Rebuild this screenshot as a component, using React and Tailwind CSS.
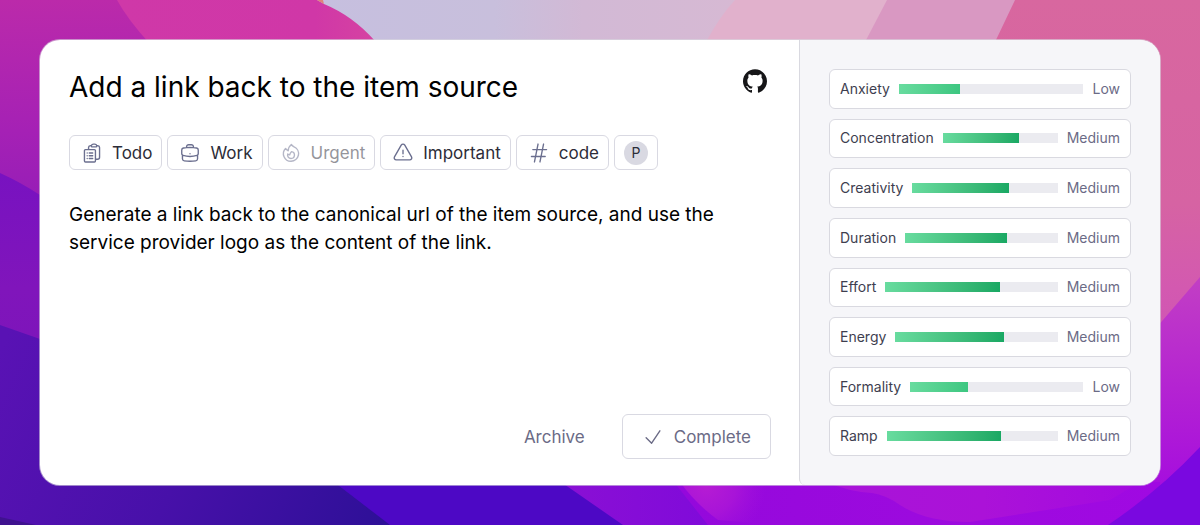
import React from 'react';
import {
  HiOutlineBriefcase,
  HiOutlineCheck,
  HiOutlineClipboardDocumentList,
  HiOutlineExclamationTriangle,
  HiOutlineFire,
  HiOutlineHashtag,
} from 'react-icons/hi2';
import { SiGithub } from 'react-icons/si';

const tags = [
  { label: 'Todo', icon: HiOutlineClipboardDocumentList },
  { label: 'Work', icon: HiOutlineBriefcase },
  { label: 'Urgent', icon: HiOutlineFire, muted: true },
  { label: 'Important', icon: HiOutlineExclamationTriangle },
  { label: 'code', icon: HiOutlineHashtag },
];

const attributes = [
  { name: 'Anxiety', level: 1 },
  { name: 'Concentration', level: 2 },
  { name: 'Creativity', level: 2 },
  { name: 'Duration', level: 2 },
  { name: 'Effort', level: 2 },
  { name: 'Energy', level: 2 },
  { name: 'Formality', level: 1 },
  { name: 'Ramp', level: 2 },
];

const levels = ['None', 'Low', 'Medium', 'High'];

function Wallpaper() {
  return (
    <svg
      className="absolute inset-0 -z-10 h-full w-full"
      viewBox="0 0 1200 525"
      preserveAspectRatio="none"
      aria-hidden="true"
    >
      <defs>
        <linearGradient id="left" x1="0" y1="0" x2="0" y2="1">
          <stop offset="0" stopColor="#bb2aaa" />
          <stop offset="0.5" stopColor="#a521b5" />
          <stop offset="1" stopColor="#8a1bb8" />
        </linearGradient>
        <linearGradient id="leftMid" x1="0" y1="0" x2="0" y2="1">
          <stop offset="0" stopColor="#7812c0" />
          <stop offset="0.4" stopColor="#8015bb" />
          <stop offset="1" stopColor="#7814b8" />
        </linearGradient>
        <linearGradient id="bottom" gradientUnits="userSpaceOnUse" x1="0" y1="350" x2="390" y2="525">
          <stop offset="0" stopColor="#5912b4" />
          <stop offset="0.5" stopColor="#4710a9" />
          <stop offset="1" stopColor="#2d1097" />
        </linearGradient>
        <linearGradient id="pink">
          <stop offset="0" stopColor="#cf38a8" />
          <stop offset="0.7" stopColor="#d037a7" />
          <stop offset="1" stopColor="#d8489f" />
        </linearGradient>
        <linearGradient id="lavender">
          <stop offset="0" stopColor="#c6bfdf" />
          <stop offset="0.4" stopColor="#c8bfdc" />
          <stop offset="0.6" stopColor="#d2b9d5" />
          <stop offset="1" stopColor="#d7b9d3" />
        </linearGradient>
        <linearGradient id="right" x1="0" y1="0" x2="0" y2="1">
          <stop offset="0" stopColor="#d8679f" />
          <stop offset="0.6" stopColor="#d663a3" />
          <stop offset="0.85" stopColor="#d359b0" />
          <stop offset="1" stopColor="#cf55b5" />
        </linearGradient>
        <linearGradient id="rightLow" gradientUnits="userSpaceOnUse" x1="0" y1="277" x2="0" y2="500">
          <stop offset="0" stopColor="#c23fc4" />
          <stop offset="0.5" stopColor="#b423d2" />
          <stop offset="1" stopColor="#a40bdf" />
        </linearGradient>
        <linearGradient id="violet" x1="0" y1="0" x2="1" y2="0">
          <stop offset="0" stopColor="#8a10d4" />
          <stop offset="1" stopColor="#7d08dc" />
        </linearGradient>
        <linearGradient id="glow" x1="0" y1="0" x2="1" y2="0">
          <stop offset="0" stopColor="#9408dc" />
          <stop offset="0.5" stopColor="#9c0ade" />
          <stop offset="1" stopColor="#a009e2" />
        </linearGradient>
        <linearGradient id="glowRight" x1="0" y1="0" x2="1" y2="0">
          <stop offset="0" stopColor="#a814d8" />
          <stop offset="0.5" stopColor="#ab12d8" />
          <stop offset="1" stopColor="#a30ae0" />
        </linearGradient>
        <radialGradient id="flare" gradientUnits="userSpaceOnUse" cx="706" cy="485" r="60">
          <stop offset="0" stopColor="#b61cd3" />
          <stop offset="0.5" stopColor="#a814d8" />
          <stop offset="1" stopColor="#a010dc" stopOpacity="0" />
        </radialGradient>
      </defs>
      <path d="M0 0H600V262H0Z" fill="url(#left)" />
      <path d="M0 173Q20 182 40 195L400 300V460L0 345Z" fill="url(#leftMid)" />
      <path d="M0 325L40 339L400 460V525H0Z" fill="url(#bottom)" />
      <path d="M0 517L36 525H0Z" fill="#3f128f" />
      <path d="M117 0Q128 20 150 44H400V0Z" fill="url(#pink)" />
      <path d="M317 0L324 4Q353 16 375 41H760V0Z" fill="url(#lavender)" />
      <path d="M317 0H323L324 4Z" fill="#e0837c" />
      <path d="M735 0Q720 16 706 42H900V0Z" fill="#e1b1cc" />
      <path d="M887 0L865 42H1020V0Z" fill="#d998c2" />
      <path d="M1015 0L995 42V100H1140V340H1200V0Z" fill="url(#right)" />
      <path d="M1200 277L1150 335V480H1000V525H1200Z" fill="url(#rightLow)" />
      <path d="M334 482L390 525H700V482Z" fill="#4d08c5" />
      <path d="M561 482L623 525H760V482Z" fill="url(#violet)" />
      <path d="M674 482L708 525H1160V482Z" fill="url(#glow)" />
      <path d="M680 482Q696 504 718 520L780 525V482Z" fill="url(#flare)" />
      <path d="M826 482Q850 492 872 493Q886 495 900 505Q926 522 970 522L1110 500L1140 482Z" fill="url(#glowRight)" />
      <path d="M1200 447Q1160 490 1108 525H1200Z" fill="#7a08e0" />
    </svg>
  );
}

function Tag({ label, icon: Icon, muted }) {
  return (
    <li className="flex h-[35px] items-center rounded-md border border-[#d9d9e2] pr-[9px] pl-[11px]">
      <span className={`flex items-center gap-[9px] text-[#2c2c38] ${muted ? 'opacity-50' : ''}`}>
        <Icon className="size-[22px] text-[#6b6f8f]" />
        <span className="text-[17px] leading-6">{label}</span>
      </span>
    </li>
  );
}

function Meter({ name, level }) {
  const id = `attribute-${name.toLowerCase()}`;

  return (
    <div className="flex flex-1 items-center gap-[9px] rounded-md border border-[#d9d9e0] bg-white px-2.5 text-sm">
      <span id={id} className="text-[#3e3e4f]">{name}</span>
      <div
        role="meter"
        aria-labelledby={id}
        aria-valuemin={0}
        aria-valuemax={3}
        aria-valuenow={level}
        className="h-2.5 flex-1 bg-[#ebebf0]"
      >
        <div
          className={`h-full bg-linear-100 from-[#68dc9f] ${level > 1 ? 'to-[#18a863]' : 'to-[#3cc680]'}`}
          style={{ width: `${(level / 3) * 100}%` }}
        />
      </div>
      <span className="text-[#6b6b86]">{levels[level]}</span>
    </div>
  );
}

export default function App() {
  return (
    <div className="relative isolate flex min-h-screen flex-col p-10 font-['Inter',sans-serif]">
      <Wallpaper />
      <div className="flex flex-1 overflow-hidden rounded-[20px] bg-white ring-1 ring-[#d9d9e0]/60">
        <main className="flex flex-1 flex-col pt-[29px] pr-7 pb-[26px] pl-[29px]">
          <header className="flex items-start justify-between">
            <h1 className="text-[28px] leading-9 text-black">Add a link back to the item source</h1>
            <a href="#source" aria-label="View source on GitHub" className="mr-1 text-[#161618]">
              <SiGithub className="size-6" />
            </a>
          </header>

          <ul className="mt-[30px] flex flex-wrap gap-[5px]">
            {tags.map((tag) => (
              <Tag key={tag.label} {...tag} />
            ))}
            <li className="flex h-[35px] items-center rounded-md border border-[#d9d9e2] px-[9px]">
              <span className="flex size-6 items-center justify-center rounded-full bg-[#d9d9e2] text-sm text-[#2c2c38]">
                P
              </span>
            </li>
          </ul>

          <p className="mt-[31px] max-w-[660px] text-[19px] leading-7 text-black">
            Generate a link back to the canonical url of the item source, and use the service provider
            logo as the content of the link.
          </p>

          <div className="mt-auto flex items-center justify-end gap-[37px] text-[17px] leading-6 text-[#6b6b86]">
            <button type="button">Archive</button>
            <button
              type="button"
              className="flex h-[45px] items-center gap-2.5 rounded-md border border-[#d9d9e2] px-[19px]"
            >
              <HiOutlineCheck className="size-[22px]" />
              Complete
            </button>
          </div>
        </main>

        <aside className="flex w-[361px] flex-col gap-2.5 rounded-bl-md border-l border-[#d9d9e0] bg-[#f6f6f9] px-[29px] pt-[29px] pb-[29px]">
          {attributes.map((attribute) => (
            <Meter key={attribute.name} {...attribute} />
          ))}
        </aside>
      </div>
    </div>
  );
}
